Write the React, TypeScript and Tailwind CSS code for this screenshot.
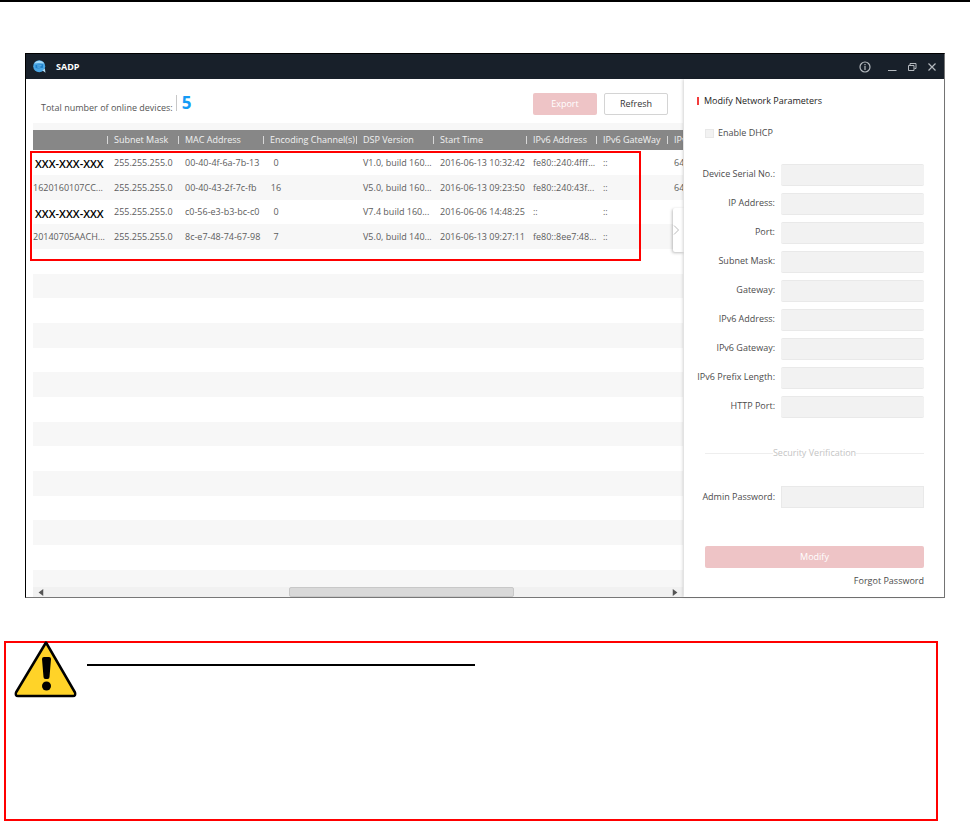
import { useState } from "react";

type Row = {
  serial: string;
  masked?: boolean;
  mask: string;
  mac: string;
  channels: string;
  dsp: string;
  start: string;
  ipv6: string;
  gateway: string;
  prefix: string;
};

const rows: Row[] = [
  { serial: "XXX-XXX-XXX", masked: true, mask: "255.255.255.0", mac: "00-40-4f-6a-7b-13", channels: "0", dsp: "V1.0, build 160...", start: "2016-06-13 10:32:42", ipv6: "fe80::240:4fff...", gateway: "::", prefix: "64" },
  { serial: "1620160107CC...", mask: "255.255.255.0", mac: "00-40-43-2f-7c-fb", channels: "16", dsp: "V5.0, build 160...", start: "2016-06-13 09:23:50", ipv6: "fe80::240:43f...", gateway: "::", prefix: "64" },
  { serial: "XXX-XXX-XXX", masked: true, mask: "255.255.255.0", mac: "c0-56-e3-b3-bc-c0", channels: "0", dsp: "V7.4 build 160...", start: "2016-06-06 14:48:25", ipv6: "::", gateway: "::", prefix: "" },
  { serial: "20140705AACH...", mask: "255.255.255.0", mac: "8c-e7-48-74-67-98", channels: "7", dsp: "V5.0, build 140...", start: "2016-06-13 09:27:11", ipv6: "fe80::8ee7:48...", gateway: "::", prefix: "" },
];

const emptyRows = Array.from({ length: 14 }, (_, i) => i);

const headers = [
  "Subnet Mask",
  "MAC Address",
  "Encoding Channel(s)",
  "DSP Version",
  "Start Time",
  "IPv6 Address",
  "IPv6 GateWay",
  "IPv6",
];

const fields = [
  "Device Serial No.:",
  "IP Address:",
  "Port:",
  "Subnet Mask:",
  "Gateway:",
  "IPv6 Address:",
  "IPv6 Gateway:",
  "IPv6 Prefix Length:",
  "HTTP Port:",
];

function TitleBar() {
  return (
    <header className="flex h-[25px] items-center bg-[#18202a] pr-[7px] pl-[7px] text-[#b4b9be]">
      <svg className="size-[13px]" viewBox="0 0 13 13" aria-hidden="true">
        <circle cx="6.2" cy="6.2" r="6" fill="#4aa6e4" />
        <path d="M1.200 3.500A6 6 0 0 1 11.200 3.500L6 3Z" fill="#a5d8f7" />
        <path d="M2.500 5l7.500-.8v3.600l-5 .8-2.500-.6z" fill="#1f80c9" />
        <path d="M4 6l4.500-.5M4.500 7.300l3-.3" stroke="#7cc4f1" strokeWidth=".7" />
        <path d="M9.500 10.500l2.300-2 .7 4.200z" fill="#b7dff6" />
      </svg>
      <h1 className="ml-[10px] flex-1 text-[9px] font-bold text-white">SADP</h1>
      <button type="button" aria-label="Information">
        <svg className="size-3" viewBox="0 0 12 12" fill="none" stroke="currentColor">
          <circle cx="6" cy="6" r="5" strokeWidth="1.200" />
          <path d="M6 5v4M6 3v1.200" strokeWidth="1.200" />
        </svg>
      </button>
      <button type="button" aria-label="Minimize" className="ml-4">
        <svg className="size-[10px]" viewBox="0 0 10 10" stroke="currentColor">
          <path d="M1 8.500h8.500" />
        </svg>
      </button>
      <button type="button" aria-label="Restore" className="ml-[10px]">
        <svg className="size-[10px]" viewBox="0 0 10 10" fill="none" stroke="currentColor">
          <path d="M1.500 3.500h5.500v5h-5.500zM3 3V1.500h6v5H7.500" />
        </svg>
      </button>
      <button type="button" aria-label="Close" className="ml-[10px]">
        <svg className="size-[10px]" viewBox="0 0 10 10" stroke="currentColor">
          <path d="M1.500 1.500l7 7M8.500 1.500l-7 7" strokeWidth="1.200" />
        </svg>
      </button>
    </header>
  );
}

function DeviceTable() {
  return (
    <table className="w-[735px] table-fixed border-collapse text-left whitespace-nowrap">
      <colgroup>
        <col className="w-[74px]" />
        <col className="w-[71px]" />
        <col className="w-[85px]" />
        <col className="w-[93px]" />
        <col className="w-[77px]" />
        <col className="w-[93px]" />
        <col className="w-[70px]" />
        <col className="w-[71px]" />
        <col />
      </colgroup>
      <thead>
        <tr className="h-5 bg-[#878787] text-[#f2f2f2]">
          <th className="p-0" aria-label="Device Serial No." />
          {headers.map((h) => (
            <th key={h} className="p-0 font-normal">
              <span className="flex items-center gap-[6px]">
                <span className="h-2 w-px bg-[#d8d8d8]" />
                {h}
              </span>
            </th>
          ))}
        </tr>
      </thead>
      <tbody className="text-[#5c5c5c]">
        {rows.map((r) => (
          <tr key={r.mac} className="h-[25px] even:bg-[#f7f7f7] nth-[3n]:h-6">
            <td className="p-0">
              {r.masked ? (
                <span className="block pt-[3px] pl-[2px] text-[11px] font-semibold text-black">{r.serial}</span>
              ) : (
                r.serial
              )}
            </td>
            <td className="p-0 pl-[7px]">{r.mask}</td>
            <td className="p-0 pl-[7px]">{r.mac}</td>
            <td className="p-0 pl-[7px]">
              <span className="inline-block w-3 text-center">{r.channels}</span>
            </td>
            <td className="p-0 pl-[7px]">{r.dsp}</td>
            <td className="p-0 pl-[7px]">{r.start}</td>
            <td className="p-0 pl-[7px]">{r.ipv6}</td>
            <td className="p-0 pl-[7px]">{r.gateway}</td>
            <td className="p-0 pl-[7px]">{r.prefix}</td>
          </tr>
        ))}
        {emptyRows.map((i) => (
          <tr key={i} className="h-[25px] even:bg-[#f7f7f7] nth-[3n]:h-6">
            <td colSpan={9} className="p-0" />
          </tr>
        ))}
      </tbody>
    </table>
  );
}

function DevicePane() {
  return (
    <main className="relative flex min-w-0 flex-1 flex-col pl-[7px]">
      <div className="flex h-11 items-center pr-4 pl-2">
        <p className="pt-[14px] text-[#555]">Total number of online devices:</p>
        <span className="mt-1 ml-[3px] h-4 w-px bg-[#c8c8c8]" />
        <strong className="mt-1 ml-[5px] flex-1 text-[17px] leading-5 text-[#149bf5]">5</strong>
        <button type="button" className="mt-[6px] h-[22px] w-16 rounded-xs bg-[#eec4c6] text-white">
          Export
        </button>
        <button type="button" className="mt-[6px] ml-[7px] h-[22px] w-16 rounded-xs border border-[#d4d4d4] text-[#333]">
          Refresh
        </button>
      </div>
      <div className="mr-px h-0 grow overflow-hidden">
        <div className="h-[7px] bg-[#f7f7f7]" />
        <DeviceTable />
      </div>
      <div className="z-10 mr-px flex h-[10px] items-center bg-[#f1f1f1] px-[5px]">
        <svg className="size-[7px]" viewBox="0 0 6 6" aria-hidden="true">
          <path d="M4.500 0v6L.5 3z" fill="#555" />
        </svg>
        <div className="flex h-full flex-1 justify-center pl-[86px]">
          <div className="h-full w-[225px] rounded-xs border border-[#c8c8c8] bg-[#d9d9d9]" />
        </div>
        <svg className="size-[7px]" viewBox="0 0 6 6" aria-hidden="true">
          <path d="M1.500 0v6l4-3z" fill="#555" />
        </svg>
      </div>
      <div className="pointer-events-none absolute top-[72px] left-1 h-[110px] w-[611px] border-2 border-[#f00]" />
      <button
        type="button"
        aria-label="Collapse panel"
        className="absolute top-[129px] right-0 flex h-11 w-[11px] items-center rounded-l-xs bg-white text-[#bbb] shadow-[-1px_1px_3px_rgba(0,0,0,0.25)]"
      >
        <svg className="h-3 w-[7px]" viewBox="0 0 7 12" fill="none" stroke="currentColor">
          <path d="M1 1.500l4.500 4.500L1 10.500" />
        </svg>
      </button>
    </main>
  );
}

function ParametersPane() {
  const [dhcp, setDhcp] = useState(false);
  return (
    <aside className="z-10 w-[260px] bg-white pt-[15px] pr-5 pb-[9px] pl-[13px] text-[#4c4c4c] shadow-[-1px_0_3px_rgba(0,0,0,0.18)]">
      <h2 className="flex h-[14px] items-center gap-[5px] text-[#222]">
        <span className="h-2 w-[2px] bg-[#f23c3c]" />
        Modify Network Parameters
      </h2>
      <label className="mt-[18px] flex h-[14px] items-center gap-1 pl-2">
        <input
          type="checkbox"
          checked={dhcp}
          onChange={(e) => setDhcp(e.target.checked)}
          className="size-[9px] appearance-none border border-[#e8e8e8] bg-[#f2f2f2] checked:bg-[#888]"
        />
        Enable DHCP
      </label>
      <div className="mt-6 flex flex-col gap-[7px]">
        {fields.map((f) => (
          <label key={f} className="flex h-[22px] items-center justify-end gap-[6px] whitespace-nowrap">
            <span className="pb-[2px]">{f}</span>
            <input type="text" className="h-[22px] w-[143px] rounded-xs border-y border-[#e9e9e9] bg-[#f2f2f2] px-1" />
          </label>
        ))}
      </div>
      <div className="mt-7 flex h-[14px] items-center pl-2 text-[#c4c4c4]">
        <span className="h-px flex-1 bg-[#eee]" />
        Security Verification
        <span className="h-px flex-1 bg-[#eee]" />
      </div>
      <label className="mt-[26px] flex items-center justify-end gap-[6px] whitespace-nowrap">
        <span>Admin Password:</span>
        <input type="password" className="h-[22px] w-[143px] border border-[#e9e9e9] bg-[#f2f2f2] px-1" />
      </label>
      <div className="mt-[38px] pl-2">
        <button type="button" className="block h-[22px] w-full rounded-xs bg-[#eec4c6] text-white">
          Modify
        </button>
      </div>
      <div className="mt-[6px] flex h-[14px] justify-end">
        <a href="#forgot">Forgot Password</a>
      </div>
    </aside>
  );
}

function Notice() {
  return (
    <section className="mt-[43px] mr-8 ml-1 flex h-[180px] items-start border-2 border-[#f00] pl-2">
      <svg className="-mt-[3px] h-[58px] w-[63px]" viewBox="0 0 63 58" role="img" aria-label="Warning">
        <path d="M32 2.500L61 52.500Q62 56 59 56H4Q1 56 2 52.500Z" fill="#ffd328" stroke="#000" strokeWidth="2.500" strokeLinejoin="round" />
        <path d="M28 19q0-2 2-2h5q2 0 2 2l-1.500 18q0 2-2 2h-2q-2 0-2-2z" fill="#000" />
        <circle cx="32.500" cy="46" r="4.500" fill="#000" />
      </svg>
      <div className="mt-[21px] ml-[10px] h-[2px] w-[388px] bg-black" />
    </section>
  );
}

export default function App() {
  return (
    <div className="bg-white font-['Open_Sans','Noto_Sans',sans-serif] text-[9px] leading-[14px]">
      <div className="h-[2px] bg-black" />
      <div className="mx-[25px] mt-[51px] border border-t-black border-r-[#777] border-b-[#777] border-l-black">
        <TitleBar />
        <div className="flex">
          <DevicePane />
          <ParametersPane />
        </div>
      </div>
      <Notice />
    </div>
  );
}
